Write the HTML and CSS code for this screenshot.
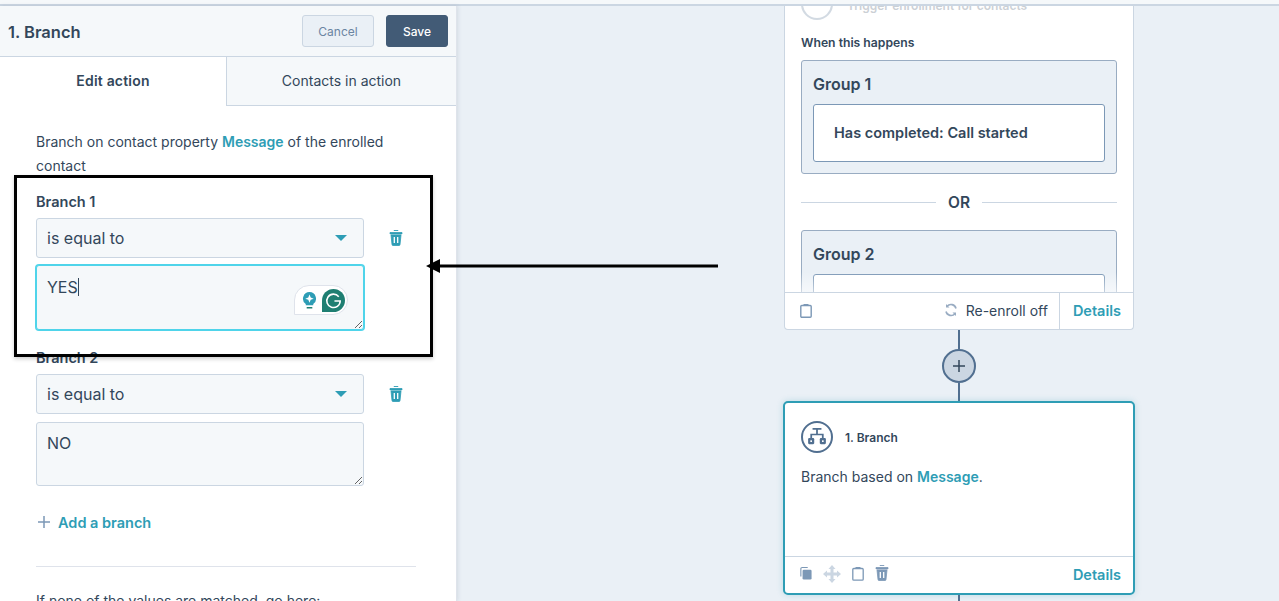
FILE: index.html
```html
<!DOCTYPE html>
<html lang="en">
<head>
  <meta charset="UTF-8">
  <title>1. Branch</title>
  <link rel="stylesheet" href="styles.css">
</head>
<body>
  <div class="topline"></div>
  <div class="main">
    <aside class="panel">
      <header class="panel-head">
        <h1>1. Branch</h1>
        <div class="head-btns">
          <button class="btn btn-cancel">Cancel</button>
          <button class="btn btn-save">Save</button>
        </div>
      </header>
      <div class="tabs">
        <div class="tab tab-active">Edit action</div>
        <div class="tab">Contacts in action</div>
      </div>
      <div class="panel-body">
        <p class="intro">Branch on contact property <a class="link">Message</a> of the enrolled contact</p>

        <div class="branch">
          <div class="branch-label">Branch 1</div>
          <div class="branch-row">
            <div class="select">is equal to<span class="caret-down"></span></div>
            <svg class="trash" viewBox="0 0 14 16"><path d="M5 1.500V1h4v.5M1 3h12v1.400H1zM2 5.400h10L11 15a1 1 0 0 1-1 1H4a1 1 0 0 1-1-1z" fill="#2e9db5" stroke="#2e9db5" stroke-width=".8"/><path d="M5.300 7.500v6M8.700 7.500v6" stroke="#fff" stroke-width="1.300"/></svg>
          </div>
          <div class="area area-focus">YES<span class="text-cursor"></span>
            <div class="gram">
              <svg class="gram-bulb" viewBox="0 0 16 20"><path d="M8 1a7 7 0 0 0-4 12.700V15h8v-1.300A7 7 0 0 0 8 1z" fill="#2e9db5"/><path d="M8 3.500l1.300 3.200 3.200 1.300-3.200 1.300L8 12.500l-1.300-3.200L3.500 8l3.200-1.300z" fill="#fff"/><path d="M5 17h6v1.500H5z" fill="#1f7f72"/></svg>
              <svg class="gram-g" viewBox="0 0 24 24"><path d="M12 0a12 12 0 0 1 0 24H0v-12A12 12 0 0 1 12 0z" fill="#1f7f72"/><path d="M17.500 8A7 7 0 1 0 19 12.500H13" fill="none" stroke="#fff" stroke-width="1.600"/></svg>
            </div>
          </div>
        </div>

        <div class="branch branch-two">
          <div class="branch-label">Branch 2</div>
          <div class="branch-row">
            <div class="select">is equal to<span class="caret-down"></span></div>
            <svg class="trash" viewBox="0 0 14 16"><path d="M5 1.500V1h4v.5M1 3h12v1.400H1zM2 5.400h10L11 15a1 1 0 0 1-1 1H4a1 1 0 0 1-1-1z" fill="#2e9db5" stroke="#2e9db5" stroke-width=".8"/><path d="M5.300 7.500v6M8.700 7.500v6" stroke="#fff" stroke-width="1.300"/></svg>
          </div>
          <div class="area area-tall">NO</div>
        </div>

        <div class="add-branch">
          <svg class="plus" viewBox="0 0 12 12"><path d="M6 0v12M0 6h12" stroke="#7c98b6" stroke-width="1.500"/></svg>
          <a class="link">Add a branch</a>
        </div>
        <hr class="sep">
        <p class="intro">If none of the values are matched, go here:</p>
      </div>
    </aside>

    <section class="canvas">
      <div class="card trigger">
        <div class="trigger-body">
          <div class="trigger-head">
            <span class="ghost-icon"></span>
            <span class="ghost-text">Trigger enrollment for contacts</span>
          </div>
          <div class="when">When this happens</div>
          <div class="group">
            <div class="group-title">Group 1</div>
            <div class="filter">Has completed: Call started</div>
          </div>
          <div class="or"><span>OR</span></div>
          <div class="group">
            <div class="group-title">Group 2</div>
            <div class="filter"></div>
          </div>
          <div class="fade"></div>
        </div>
        <div class="trigger-foot">
          <svg class="clip" viewBox="0 0 12 15"><path d="M1.800 2.500h8.400a1 1 0 0 1 1 1v9.700a1 1 0 0 1-1 1H1.800a1 1 0 0 1-1-1V3.500a1 1 0 0 1 1-1z" fill="none" stroke="#7c98b6" stroke-width="1.400"/><path d="M3.500 1h5v2h-5z" fill="#7c98b6"/></svg>
          <div class="reenroll">
            <svg class="sync" viewBox="0 0 14 14"><path d="M12 5.500A5.200 5.200 0 0 0 3 3.300M2 8.500a5.200 5.200 0 0 0 9 2.200" fill="none" stroke="#99acc2" stroke-width="1.600"/><path d="M2 1v3.500h3.500zM12 13V9.500H8.500z" fill="#99acc2"/></svg>
            Re-enroll off
          </div>
          <a class="link foot-details">Details</a>
        </div>
      </div>

      <div class="wire wire-a"></div>
      <div class="add-node"><svg viewBox="0 0 12 12"><path d="M6 0v12M0 6h12" stroke="#33475b" stroke-width="1.500"/></svg></div>
      <div class="wire wire-b"></div>

      <div class="card action">
        <div class="action-head">
          <span class="action-icon">
            <svg viewBox="0 0 18 16"><path d="M5 0h8v1.500H5zM8.200 1.500h1.600V5H8.200zM3 5h12v4h-1.600V6.500H4.600V9H3z" fill="#516f90"/><rect x="1" y="9" width="5.500" height="5.500" rx="1" fill="#516f90"/><rect x="11.500" y="9" width="5.500" height="5.500" rx="1" fill="#516f90"/><rect x="3" y="11" width="1.500" height="1.500" fill="#fff"/><rect x="13.500" y="11" width="1.500" height="1.500" fill="#fff"/></svg>
          </span>
          <span class="action-title">1. Branch</span>
        </div>
        <p class="action-text">Branch based on <a class="link">Message</a>.</p>
        <div class="action-foot">
          <div class="tools">
            <svg class="tool" viewBox="0 0 14 15"><path d="M1 11V2a1.500 1.500 0 0 1 1.500-1.500H9" fill="none" stroke="#7c98b6" stroke-width="1.300"/><rect x="3" y="3" width="10.500" height="11.500" rx="1.500" fill="#7c98b6"/></svg>
            <svg class="tool tool-move" viewBox="0 0 18 18"><path d="M9 0l3.500 4H10.500v3.500H14V5.500L18 9l-4 3.500v-2h-3.500V14h2L9 18l-3.500-4h2v-3.500H4v2L0 9l4-3.500v2h3.500V4h-2z" fill="#cbd6e2"/></svg>
            <svg class="tool" viewBox="0 0 12 15"><path d="M1.800 2.500h8.400a1 1 0 0 1 1 1v9.700a1 1 0 0 1-1 1H1.800a1 1 0 0 1-1-1V3.500a1 1 0 0 1 1-1z" fill="none" stroke="#7c98b6" stroke-width="1.300"/><path d="M3.500 1h5v2h-5z" fill="#7c98b6"/></svg>
            <svg class="tool tool-trash" viewBox="0 0 14 16"><path d="M5 1.500V1h4v.5M1 3h12v1.400H1zM2 5.400h10L11 15a1 1 0 0 1-1 1H4a1 1 0 0 1-1-1z" fill="#7c98b6" stroke="#7c98b6" stroke-width=".8"/><path d="M5.300 7.500v6M8.700 7.500v6" stroke="#fff" stroke-width="1.300"/></svg>
          </div>
          <a class="link">Details</a>
        </div>
      </div>
      <div class="wire wire-c"></div>
    </section>
  </div>

  <!-- annotation drawn over the screenshot -->
  <div class="mark-box"></div>
  <svg class="mark-arrow" viewBox="0 0 292 16"><path d="M292 8H12" stroke="#000" stroke-width="3"/><path d="M0 8l14-7v14z" fill="#000"/></svg>
</body>
</html>
```

FILE: styles.css
```css
* { box-sizing: border-box; margin: 0; padding: 0; }
html, body { height: 100%; overflow: hidden; }
body {
  font-family: 'Inter', 'Lato', sans-serif;
  background: #eaf0f6;
  color: #33475b;
  font-size: 14px;
  display: flex;
  flex-direction: column;
  position: relative;
}
.link { color: #2e9db5; font-weight: 600; }

.topline { height: 6px; flex: none; background: #f5f8fa; border-bottom: 2px solid #cbd6e2; }
.main { flex: 1; display: flex; min-height: 0; }

/* left panel */
.panel {
  width: 457px;
  flex: none;
  background: #fff;
  border-right: 1px solid #dfe3eb;
  box-shadow: 1px 0 4px rgba(45,62,80,0.12);
  overflow: hidden;
}
.panel-head {
  height: 51px;
  background: #f5f8fa;
  border-bottom: 1px solid #cbd6e2;
  display: flex;
  align-items: center;
  justify-content: space-between;
  padding: 0 8px;
}
.panel-head h1 { font-size: 16.500px; font-weight: 600; padding-top: 1px; }
.head-btns { display: flex; gap: 12px; }
.btn {
  height: 32px;
  border-radius: 3px;
  font-family: inherit;
  font-size: 12px;
  border: 1px solid #cbd6e2;
}
.btn-cancel { width: 72px; background: #eaf0f6; color: #6a85a2; }
.btn-save { width: 62px; background: #425b76; border-color: #425b76; color: #fff; font-weight: 500; }

.tabs { display: flex; height: 49px; }
.tab {
  display: flex;
  align-items: center;
  justify-content: center;
  flex: 1;
  background: #f5f8fa;
  border-left: 1px solid #cbd6e2;
  border-bottom: 1px solid #cbd6e2;
  font-size: 14px;
  padding-bottom: 2px;
}
.tab-active {
  flex: none;
  width: 226px;
  background: #fff;
  border: 0;
  font-weight: 600;
  letter-spacing: 0.2px;
}

.panel-body { padding: 24px 40px 0 36px; }
.intro { font-size: 14px; line-height: 24px; }

.branch { margin-top: 12px; width: 380px; }
.branch-two { margin-top: 16px; }
.branch-label { font-size: 14.500px; font-weight: 600; height: 24px; line-height: 24px; }
.branch-row { display: flex; align-items: center; margin-top: 4px; }
.select {
  width: 328px;
  height: 40px;
  background: #f5f8fa;
  border: 1px solid #cbd6e2;
  border-radius: 3px;
  display: flex;
  align-items: center;
  justify-content: space-between;
  padding: 0 16px 0 10px;
  font-size: 16px;
}
.caret-down {
  width: 0;
  height: 0;
  border-left: 6px solid transparent;
  border-right: 6px solid transparent;
  border-top: 6px solid #2e9db5;
}
.trash { width: 14px; height: 17px; margin: -2px 0 0 25px; }

.area {
  position: relative;
  width: 328px;
  height: 64px;
  margin-top: 8px;
  padding: 8px 10px;
  background: #f5f8fa;
  border: 1px solid #cbd6e2;
  border-radius: 3px;
  font-size: 16px;
  line-height: 24px;
  overflow: auto;
  resize: vertical;
}
.area-focus {
  height: 65px;
  margin-top: 7px;
  padding-top: 9px;
  border-color: #4fd4ea;
  box-shadow: 0 0 0 1px #4fd4ea;
}
.text-cursor { display: inline-block; width: 1px; height: 18px; background: #33475b; vertical-align: -3px; }
/* grammarly pill */
.gram {
  position: absolute;
  right: 15px;
  bottom: 14px;
  width: 54px;
  height: 30px;
  display: flex;
  align-items: center;
  justify-content: flex-end;
  gap: 5px;
  padding-right: 2px;
  background: #fff;
  border: 1px solid #dfe3eb;
  border-radius: 15px 15px 15px 0;
}
.gram-bulb { width: 15px; height: 19px; }
.gram-g { width: 23px; height: 23px; }

.add-branch { display: flex; align-items: center; gap: 8px; margin-top: 26px; font-size: 14.500px; height: 20px; }
.plus { width: 12px; height: 12px; margin-left: 2px; }
.sep { border: 0; border-top: 1px solid #dfe3eb; margin: 34px 0 22px; }

/* canvas side */
.canvas {
  flex: 1;
  display: flex;
  flex-direction: column;
  align-items: center;
  padding-left: 182px;
  overflow: hidden;
}
.card { width: 350px; flex: none; background: #fff; border-radius: 4px; }
.trigger { border: 1px solid #cbd6e2; border-top: 0; margin-top: -6px; }
.trigger-body { position: relative; height: 292px; padding: 0 16px; overflow: hidden; }
.trigger-head { display: flex; align-items: center; height: 32px; gap: 14px; opacity: 0.25; margin-top: -12px; }
.ghost-icon { width: 32px; height: 32px; flex: none; border: 2px solid #516f90; border-radius: 50%; }
.ghost-text { font-size: 12px; font-weight: 600; margin-top: 2px; }
.when { font-size: 12.200px; font-weight: 600; margin-top: 15px; height: 16px; line-height: 16px; }
.group {
  margin-top: 9px;
  height: 114px;
  padding: 11px 11px;
  background: #eaf0f6;
  border: 1px solid #99acc2;
  border-radius: 3px;
  flex: none;
}
.group-title { font-size: 16px; font-weight: 600; height: 24px; line-height: 24px; }
.filter {
  margin-top: 8px;
  height: 58px;
  padding: 0 20px 2px;
  display: flex;
  align-items: center;
  background: #fff;
  border: 1px solid #7c98b6;
  border-radius: 3px;
  font-size: 14.500px;
  font-weight: 600;
}
.or { display: flex; align-items: center; gap: 12px; margin: 20px 0 19px; height: 17px; font-size: 15.500px; font-weight: 600; }
.or + .group { margin-top: 0; }
.or::before, .or::after { content: ""; flex: 1; border-top: 1px solid #cbd6e2; }
.fade {
  position: absolute;
  left: 0;
  right: 0;
  bottom: 0;
  height: 20px;
  background: linear-gradient(rgba(255,255,255,0), rgba(255,255,255,0.55));
}
.trigger-foot {
  height: 37px;
  display: flex;
  align-items: center;
  border-top: 1px solid #cbd6e2;
  font-size: 14px;
}
.clip { width: 12px; height: 15px; margin-left: 15px; margin-top: -2px; }
.reenroll {
  margin-left: auto;
  margin-top: -2px;
  display: flex;
  align-items: center;
  gap: 8px;
  padding-right: 11px;
}
.sync { width: 14px; height: 14px; }
.foot-details {
  height: 100%;
  display: flex;
  align-items: center;
  padding: 0 12px 2px 13px;
  border-left: 1px solid #cbd6e2;
  font-size: 14.500px;
}

.wire { width: 2px; background: #516f90; flex: none; }
.wire-a { height: 19px; }
.wire-b { height: 18px; }
.wire-c { flex: 1; }
.add-node {
  width: 34px;
  height: 34px;
  flex: none;
  border: 2px solid #516f90;
  border-radius: 50%;
  background: #cbd6e2;
  display: flex;
  align-items: center;
  justify-content: center;
}
.add-node svg { width: 12px; height: 12px; }

.action {
  width: 352px;
  height: 194px;
  border: 2px solid #2e9db5;
  border-radius: 5px;
  box-shadow: 0 0 6px rgba(46,157,181,0.25);
  display: flex;
  flex-direction: column;
}
.action-head { display: flex; align-items: center; gap: 12px; padding: 18px 16px 0; font-size: 12px; font-weight: 600; }
.action-icon {
  width: 32px;
  height: 32px;
  border: 2px solid #516f90;
  border-radius: 50%;
  display: flex;
  align-items: center;
  justify-content: center;
}
.action-icon svg { width: 20px; height: 18px; }
.action-text { padding: 12px 16px 0; font-size: 14px; line-height: 24px; }
.action-foot {
  margin-top: auto;
  height: 37px;
  display: flex;
  align-items: center;
  justify-content: space-between;
  padding: 0 12px 2px 15px;
  border-top: 1px solid #cbd6e2;
  font-size: 14.500px;
}
.tools { display: flex; align-items: center; gap: 11px; margin-top: -1px; }
.tool { width: 12px; height: 15px; }
.tool-move { width: 18px; height: 18px; }
.tool-trash { width: 14px; height: 17px; margin-top: -3px; }

/* annotation */
.mark-box {
  position: absolute;
  left: 14px;
  top: 175px;
  width: 419px;
  height: 182px;
  border: 3px solid #000;
  box-shadow: 0 2px 4px rgba(0,0,0,0.2);
}
.mark-arrow {
  position: absolute;
  left: 426px;
  top: 258px;
  width: 292px;
  height: 16px;
}
```
